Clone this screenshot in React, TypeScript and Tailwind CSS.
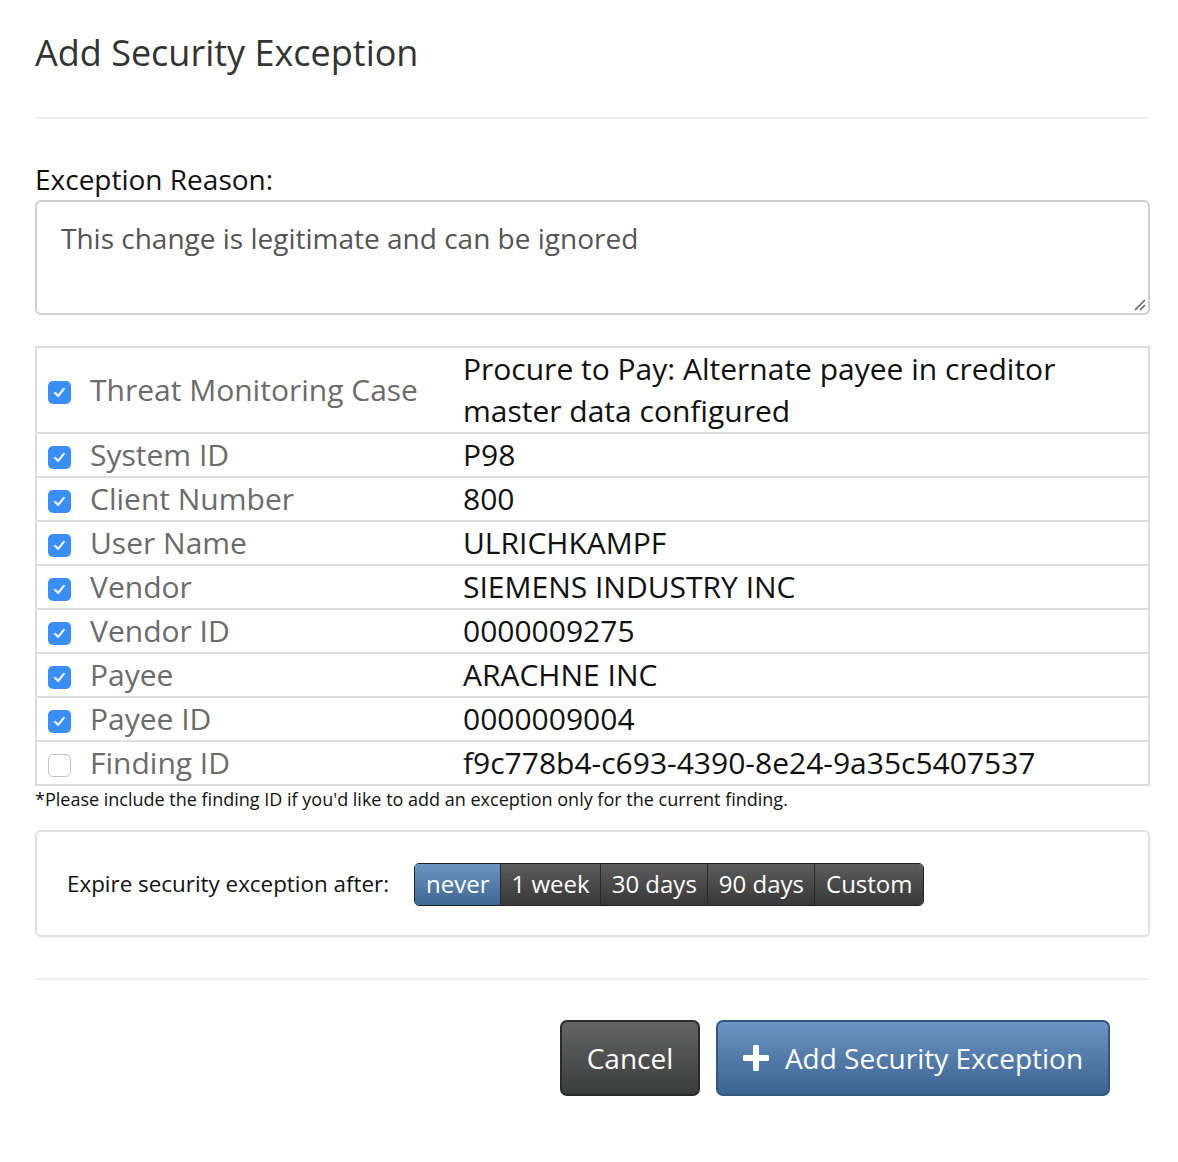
import React from "react";

const rows: { label: string; value: React.ReactNode; checked: boolean; tall?: boolean }[] = [
  { label: "Threat Monitoring Case", value: (<>Procure to Pay: Alternate payee in creditor<br />master data configured</>), checked: true, tall: true },
  { label: "System ID", value: "P98", checked: true },
  { label: "Client Number", value: "800", checked: true },
  { label: "User Name", value: "ULRICHKAMPF", checked: true },
  { label: "Vendor", value: "SIEMENS INDUSTRY INC", checked: true },
  { label: "Vendor ID", value: "0000009275", checked: true },
  { label: "Payee", value: "ARACHNE INC", checked: true },
  { label: "Payee ID", value: "0000009004", checked: true },
  { label: "Finding ID", value: "f9c778b4-c693-4390-8e24-9a35c5407537", checked: false },
];

function Check({ checked }: { checked: boolean }) {
  if (!checked) {
    return <span className="inline-block w-[23px] h-[23px] rounded-[5px] border border-[#c4c4c4] bg-white shrink-0 mt-[4px]" />;
  }
  return (
    <span className="inline-flex items-center justify-center w-[23px] h-[23px] rounded-[5px] bg-[#3a8ef7] shrink-0 mt-[4px]">
      <svg width="15" height="15" viewBox="0 0 14 14" fill="none">
        <path d="M3 7.4 L5.8 10.2 L11 3.6" stroke="white" strokeWidth="2" strokeLinecap="round" strokeLinejoin="round" />
      </svg>
    </span>
  );
}

const seg = ["never", "1 week", "30 days", "90 days", "Custom"];

export default function App() {
  return (
    <div className="w-[1178px] h-[1162px] bg-white px-[35px] pt-[28px] text-[#333]" style={{ fontFamily: '"Open Sans", "Noto Sans", sans-serif' }}>
      <h1 className="text-[36px] leading-[50px] text-[#333] font-normal">Add Security Exception</h1>
      <div className="w-[1114px] h-[2px] bg-[#eeeeee] mt-[39px]" />
      <div className="mt-[45px] text-[28px] leading-[30px] text-[#111]">Exception Reason:</div>
      <div className="relative mt-[6px] w-[1115px] h-[115px] rounded-[6px] border-2 border-[#cfcfcf] px-[24px] pt-[16px] text-[28px] leading-[40px] text-[#555]">
        This change is legitimate and can be ignored
        <svg className="absolute right-[2px] bottom-[2px]" width="14" height="14" viewBox="0 0 14 14">
          <path d="M13 3 L3 13 M13 8 L8 13" stroke="#666" strokeWidth="1.6" />
        </svg>
      </div>
      <div className="mt-[31px] w-[1115px] border-2 border-[#dddddd]">
        {rows.map((r, i) => (
          <div key={i} className={`flex ${i > 0 ? "border-t-2 border-[#dddddd]" : ""}`}>
            <div className={`w-[413px] shrink-0 flex items-center pl-[11px] ${r.tall ? "h-[84px]" : "h-[42px]"}`}>
              <Check checked={r.checked} />
              <span className="ml-[19px] text-[30px] leading-[42px] text-[#6b6b6b]">{r.label}</span>
            </div>
            <div className="pl-[13px] text-[30px] leading-[42px] text-[#111]">{r.value}</div>
          </div>
        ))}
      </div>
      <div className="text-[18px] leading-[24px] mt-[1px] text-[#111]">
        *Please include the finding ID if you'd like to add an exception only for the current finding.
      </div>
      <div className="mt-[19px] w-[1115px] h-[107px] rounded-[6px] border-2 border-[#e0e0e0] shadow-[0_1px_2px_rgba(0,0,0,0.06)] flex items-center pl-[30px]">
        <span className="text-[22.4px] text-[#111]">Expire security exception after:</span>
        <div className="ml-[25px] flex h-[43px] rounded-[5px] overflow-hidden border border-[#222] mt-[1px]">
          {seg.map((s, i) => (
            <span
              key={s}
              className={`flex items-center text-[24px] text-white pl-[11px] pr-[10px] ${i > 0 ? "border-l border-[#2a2a2a]" : ""} ${i === 0 ? "bg-gradient-to-b from-[#6d95c3] to-[#3f6795] border-[#2d5179]" : "bg-gradient-to-b from-[#5c5c5c] to-[#383838]"}`}
            >
              {s}
            </span>
          ))}
        </div>
      </div>
      <div className="w-[1114px] h-[2px] bg-[#eeeeee] mt-[41px]" />
      <div className="mt-[40px] flex justify-end pr-[33px] gap-[16px]">
        <button className="w-[140px] h-[76px] rounded-[7px] border-2 border-[#2b2b2b] bg-gradient-to-b from-[#646464] to-[#3b3d3c] text-white text-[28px]">
          Cancel
        </button>
        <button className="w-[394px] h-[76px] rounded-[7px] border-2 border-[#34577f] bg-gradient-to-b from-[#6b95c4] to-[#3d6391] text-white text-[28px] flex items-center justify-center gap-[16px]">
          <svg width="26" height="26" viewBox="0 0 26 26">
            <path d="M13 2 V24 M2 13 H24" stroke="white" strokeWidth="6" strokeLinecap="round" />
          </svg>
          Add Security Exception
        </button>
      </div>
    </div>
  );
}
